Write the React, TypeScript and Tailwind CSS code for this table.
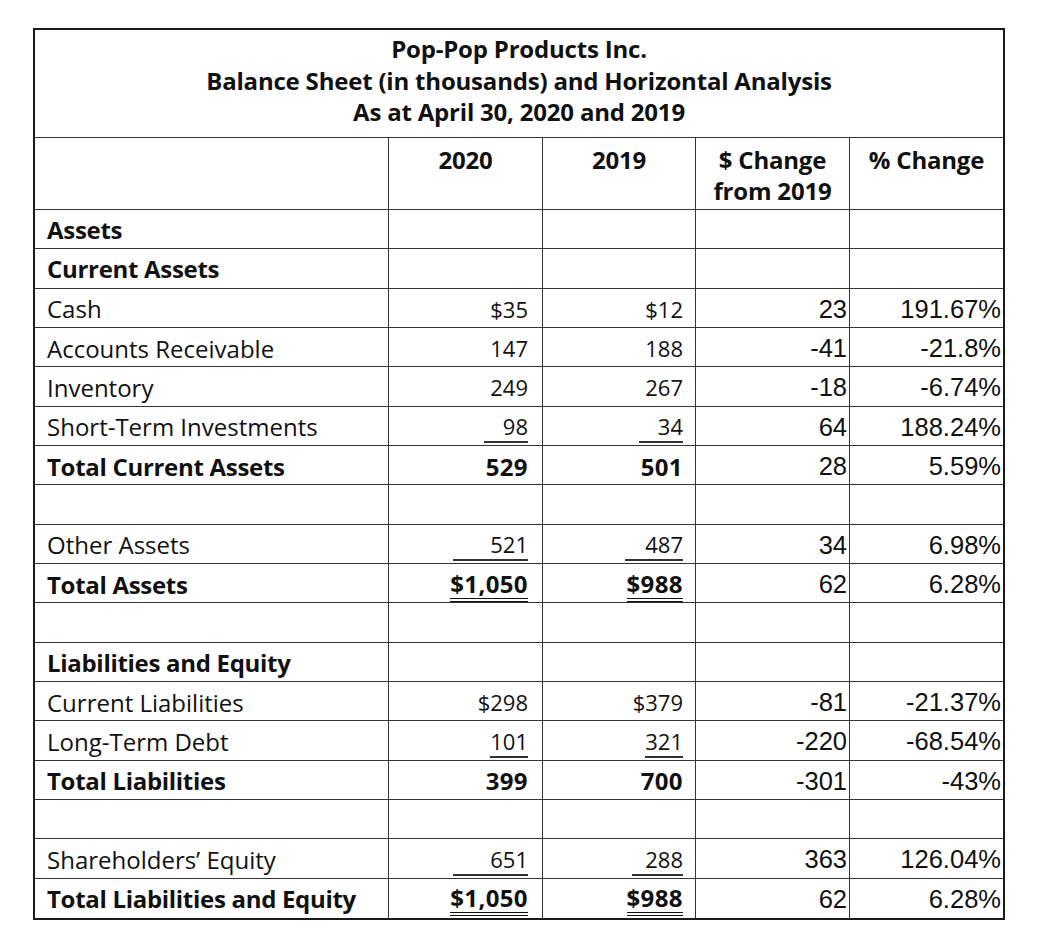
type Row = {
  label?: string
  bold?: boolean
  a?: string
  b?: string
  c?: string
  d?: string
  // underline widths for the 2020 / 2019 figures (single or double rule)
  ul?: [number, number]
  dbl?: boolean
}

const rows: Row[] = [
  { label: "Assets", bold: true },
  { label: "Current Assets", bold: true },
  { label: "Cash", a: "$35", b: "$12", c: "23", d: "191.67%" },
  { label: "Accounts Receivable", a: "147", b: "188", c: "-41", d: "-21.8%" },
  { label: "Inventory", a: "249", b: "267", c: "-18", d: "-6.74%" },
  { label: "Short-Term Investments", a: "98", b: "34", c: "64", d: "188.24%", ul: [44, 44] },
  { label: "Total Current Assets", bold: true, a: "529", b: "501", c: "28", d: "5.59%" },
  {},
  { label: "Other Assets", a: "521", b: "487", c: "34", d: "6.98%", ul: [75, 58] },
  { label: "Total Assets", bold: true, a: "$1,050", b: "$988", c: "62", d: "6.28%", dbl: true },
  {},
  { label: "Liabilities and Equity", bold: true },
  { label: "Current Liabilities", a: "$298", b: "$379", c: "-81", d: "-21.37%" },
  { label: "Long-Term Debt", a: "101", b: "321", c: "-220", d: "-68.54%", ul: [0, 0] },
  { label: "Total Liabilities", bold: true, a: "399", b: "700", c: "-301", d: "-43%" },
  {},
  { label: "Shareholders’ Equity", a: "651", b: "288", c: "363", d: "126.04%", ul: [75, 51] },
  { label: "Total Liabilities and Equity", bold: true, a: "$1,050", b: "$988", c: "62", d: "6.28%", dbl: true },
]

const cols = "grid grid-cols-[354px_154px_153px_154px_1fr]"

function Figure({ value, width, row }: { value?: string; width?: number; row: Row }) {
  if (!value) return null
  if (row.dbl) {
    return (
      <span className="inline-block border-b border-[#111] pb-[2px] leading-none translate-y-[2px]">
        <span className="inline-block border-b border-[#111] pb-[2px]">{value}</span>
      </span>
    )
  }
  if (width !== undefined) {
    return (
      <span
        className="inline-block text-right border-b-2 border-[#333] pb-[4px] leading-none translate-y-[2px]"
        style={width ? { width } : undefined}
      >
        {value}
      </span>
    )
  }
  return <span>{value}</span>
}

export default function App() {
  return (
    <div className="min-h-[948px] w-[1040px] bg-white pt-[28px] pl-[33px] text-[#111] font-['Open_Sans',sans-serif]">
      <div className="w-[972px] border-2 border-[#1a1a1a]">
        {/* Title block */}
        <div className="h-[108px] border-b border-[#333] flex flex-col items-center pt-[3px] text-[24px] font-bold leading-[31.5px] tracking-[-0.2px]">
          <div>Pop-Pop Products Inc.</div>
          <div>Balance Sheet (in thousands) and Horizontal Analysis</div>
          <div>As at April 30, 2020 and 2019</div>
        </div>

        {/* Column headings */}
        <div className={`${cols} h-[72px] border-b border-[#333] text-[24px] font-bold leading-[31px] tracking-[-0.2px]`}>
          <div className="border-r border-[#333]" />
          <div className="border-r border-[#333] text-center pt-[6px]">2020</div>
          <div className="border-r border-[#333] text-center pt-[6px]">2019</div>
          <div className="border-r border-[#333] text-center pt-[6px]">
            $ Change
            <br />
            from 2019
          </div>
          <div className="text-center pt-[6px]">% Change</div>
        </div>

        {/* Body rows */}
        {rows.map((row, i) => {
          const last = i === rows.length - 1
          const fig = row.bold ? "text-[24px] font-bold tracking-[0.4px]" : "text-[22px]"
          return (
            <div
              key={i}
              className={`${cols} h-[39.33px] ${last ? "" : "border-b border-[#333]"}`}
            >
              <div
                className={`border-r border-[#333] flex items-center pl-[12px] pt-[2px] text-[24px] ${
                  row.bold ? "font-bold tracking-[-0.3px]" : ""
                }`}
              >
                {row.label}
              </div>
              <div className={`border-r border-[#333] flex items-center justify-end pr-[14px] pt-[2px] ${fig}`}>
                <Figure value={row.a} width={row.ul?.[0]} row={row} />
              </div>
              <div className={`border-r border-[#333] flex items-center justify-end pr-[12px] pt-[2px] ${fig}`}>
                <Figure value={row.b} width={row.ul?.[1]} row={row} />
              </div>
              <div className="border-r border-[#333] flex items-center justify-end pr-[2px] pt-[1px] text-[25.5px] font-['Liberation_Sans',Arial,sans-serif]">
                {row.c}
              </div>
              <div className="flex items-center justify-end pr-[2px] pt-[1px] text-[25.5px] font-['Liberation_Sans',Arial,sans-serif]">
                {row.d}
              </div>
            </div>
          )
        })}
      </div>
    </div>
  )
}
